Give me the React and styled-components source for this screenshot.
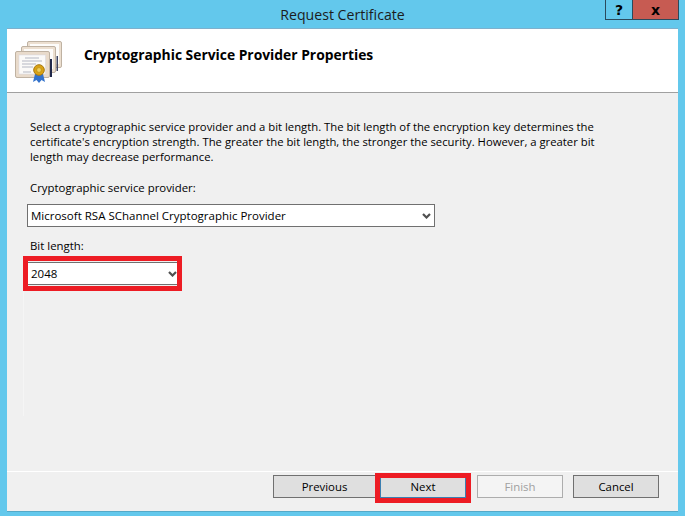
import React from "react";
import styled, { createGlobalStyle } from "styled-components";

const Global = createGlobalStyle`
  html, body { margin: 0; padding: 0; }
  body { background: #63c8ec; }
`;
const FONT = `"Open Sans", "Noto Sans", "Liberation Sans", sans-serif`;

const Win = styled.div`
  position: relative;
  width: 685px;
  height: 516px;
  box-sizing: border-box;
  padding: 0 7px 5px 7px;
  background: #63c8ec;
  display: flex;
  flex-direction: column;
  font-family: ${FONT};
  font-size: 11.5px;
  color: #000;
  overflow: hidden;
`;
const TitleBar = styled.div`
  height: 28px;
  flex: none;
  display: flex;
  align-items: center;
  justify-content: center;
  font-size: 14.15px;
  color: #1c1c1c;
`;
const Controls = styled.div`
  position: absolute;
  top: 0;
  left: 605px;
  display: flex;
  height: 20px;
`;
const Ctl = styled.div`
  box-sizing: border-box;
  width: ${p => p.$w}px;
  height: 20px;
  background: ${p => p.$bg};
  border: 1px solid #2b4a5c;
  border-top: 0;
  ${p => (p.$join ? "border-left: 0;" : "")}
  display: flex;
  align-items: center;
  justify-content: center;
  font-family: "DejaVu Sans", sans-serif;
  font-weight: 700;
  font-size: 14px;
  line-height: 18px;
  color: #000;
`;
const Panel = styled.div`
  flex: 1;
  display: flex;
  flex-direction: column;
  background: #f0f0f0;
  border-top: 1px solid #7fb0cc;
  box-shadow: 0 1px 0 #55a9c8;
  min-height: 0;
`;
const Header = styled.div`
  height: 64px;
  flex: none;
  box-sizing: border-box;
  background: #fff;
  border-bottom: 1px solid #a0a0a0;
  display: flex;
  align-items: flex-start;
  padding: 11px 0 0 7px;
`;
const HeaderTitle = styled.h1`
  margin: 6px 0 0 20px;
  font-size: 13.85px;
  font-weight: 700;
  line-height: 18px;
  color: #000;
`;
const Body = styled.div`
  flex: 1;
  box-sizing: border-box;
  padding: 26px 20px 0 23px;
  display: flex;
  flex-direction: column;
  align-items: flex-start;
  position: relative;
`;
const Para = styled.p`
  margin: 0;
  font-size: 11.3px;
  line-height: 15px;
  white-space: nowrap;
`;
const FieldLabel = styled.div`
  font-size: 11.4px;
  line-height: 15px;
  margin-top: ${p => p.$mt}px;
`;
const Select = styled.div`
  position: relative;
  box-sizing: border-box;
  width: ${p => p.$w}px;
  height: 23px;
  margin-top: ${p => p.$mt}px;
  margin-left: -3px;
  background: #fff;
  border: 1px solid #707070;
  display: flex;
  align-items: center;
  justify-content: space-between;
  padding: 0 3px 0 3px;
  line-height: 15px;
`;
const Hilite = styled.div`
  position: absolute;
  left: ${p => p.$l}px;
  right: ${p => p.$r}px;
  top: ${p => p.$t}px;
  bottom: ${p => p.$b}px;
  border: 5px solid #ed1c24;
  box-sizing: border-box;
  pointer-events: none;
`;
const Seam = styled.div`
  position: absolute;
  left: 16px;
  top: 197px;
  width: 1px;
  height: 126px;
  background: #f5f5f5;
`;
const Footer = styled.div`
  height: 40px;
  flex: none;
  box-sizing: border-box;
  border-top: 1px solid #fff;
  display: flex;
  justify-content: flex-end;
  padding: 3px 19px 0 0;
  font-size: 11.4px;
`;
const Btn = styled.div`
  position: relative;
  box-sizing: border-box;
  width: ${p => p.$w || 86}px;
  height: 23px;
  margin-left: ${p => p.$ml || 0}px;
  display: flex;
  align-items: center;
  justify-content: center;
  background: ${p => (p.$off ? "#f4f4f4" : "#dfdfdf")};
  border: 1px solid ${p => (p.$off ? "#adadad" : p.$def ? "#3c7fb1" : "#707070")};
  color: ${p => (p.$off ? "#a0a0a0" : "#000")};
`;
const ChevronSvg = styled.svg`
  flex: none;
`;
const Chevron = () => (
  <ChevronSvg width="9" height="6" viewBox="0 0 9 6">
    <path d="M1 1 L4.5 4.5 L8 1" fill="none" stroke="#505050" strokeWidth="2.2" />
  </ChevronSvg>
);
const IconSvg = styled.svg`
  flex: none;
`;
const CertIcon = () => (
  <IconSvg width="50" height="44" viewBox="0 0 50 44">
    <g stroke="#bfb2a2" strokeWidth="1" fill="#ecdfd0">
      <rect x="13.5" y="1.5" width="34" height="26" rx="1.5" />
      <rect x="16" y="4" width="29" height="20" fill="#fdfcfa" stroke="none" />
    </g>
    <rect x="42.5" y="16" width="1.5" height="15" fill="#3c4260" />
    <g stroke="#bfb2a2" strokeWidth="1" fill="#ecdfd0">
      <rect x="7.5" y="6.5" width="34" height="26" rx="1.5" />
      <rect x="10" y="9" width="29" height="20" fill="#fdfcfa" stroke="none" />
    </g>
    <rect x="36" y="19" width="2" height="18" fill="#20284a" />
    <g stroke="#bfb2a2" strokeWidth="1" fill="#e9dbcb">
      <rect x="1.5" y="11.5" width="34" height="26" rx="1.5" />
    </g>
    <rect x="5" y="15" width="26.5" height="19" fill="#fbfaf8" stroke="#d5d5e2" strokeWidth=".5" />
    <g stroke="#b4b7c2" strokeWidth="1">
      <path d="M11 18h14M8 21h20M8 24h14M8 27h11M9 32h8" />
    </g>
    <path d="M21 34 L19 42 L22.5 40 L25 43 L27.5 40 L31 42 L29 34Z" fill="#3272cc" />
    <circle cx="25" cy="30" r="5.3" fill="#d9a214" stroke="#a8790e" strokeWidth="1" />
    <circle cx="25" cy="30" r="2.4" fill="#efcf5d" stroke="#b58a16" strokeWidth=".7" />
  </IconSvg>
);

export default function App() {
  return (
    <Win>
      <Global />
      <TitleBar>Request Certificate</TitleBar>
      <Controls>
        <Ctl $w={28} $bg="#63c8ec">?</Ctl>
        <Ctl $w={46} $bg="#c75b52" $join>x</Ctl>
      </Controls>
      <Panel>
        <Header>
          <CertIcon />
          <HeaderTitle>Cryptographic Service Provider Properties</HeaderTitle>
        </Header>
        <Body>
          <Seam />
          <Para>
            Select a cryptographic service provider and a bit length. The bit length of the encryption key determines the<br />
            certificate's encryption strength. The greater the bit length, the stronger the security. However, a greater bit<br />
            length may decrease performance.
          </Para>
          <FieldLabel $mt={16}>Cryptographic service provider:</FieldLabel>
          <Select $w={408} $mt={9}>
            Microsoft RSA SChannel Cryptographic Provider
            <Chevron />
          </Select>
          <FieldLabel $mt={11}>Bit length:</FieldLabel>
          <Select $w={154} $mt={9}>
            2048
            <Chevron />
            <Hilite $l={-5} $r={-2} $t={-7} $b={-7} />
          </Select>
        </Body>
        <Footer>
          <Btn $w={103}>Previous</Btn>
          <Btn $def $ml={4}>
            Next
            <Hilite $l={-6} $r={-6} $t={-3} $b={-6} />
          </Btn>
          <Btn $off $ml={11}>Finish</Btn>
          <Btn $ml={10}>Cancel</Btn>
        </Footer>
      </Panel>
    </Win>
  );
}
